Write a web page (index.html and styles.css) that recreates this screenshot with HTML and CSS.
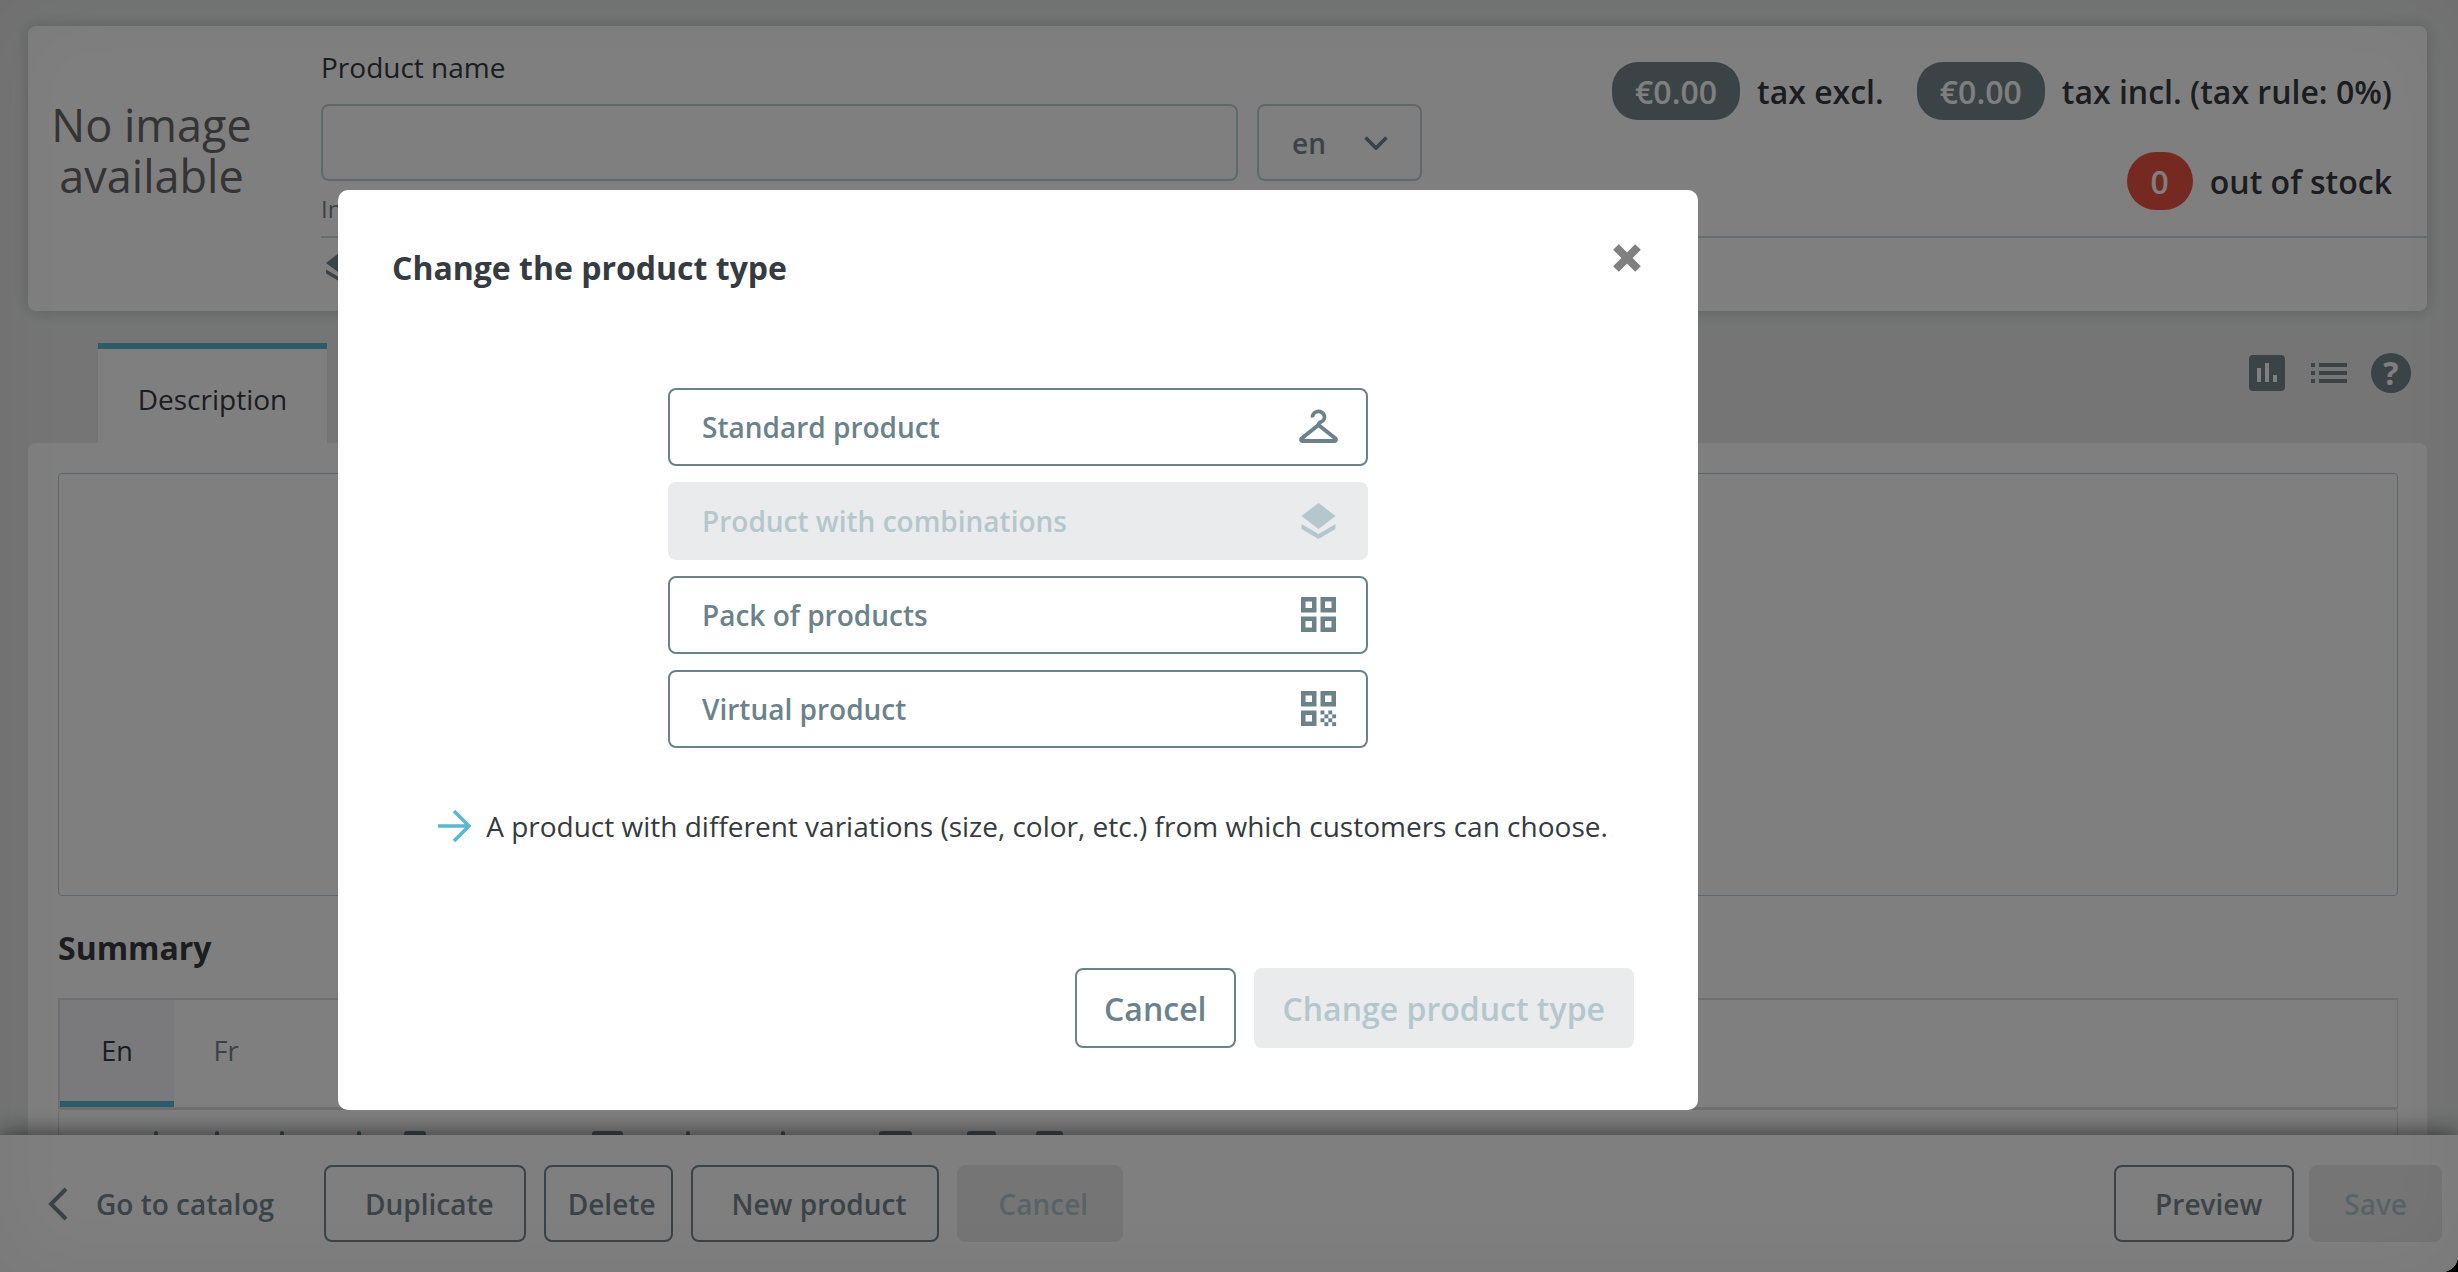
FILE: index.html
```html
<!DOCTYPE html>
<html lang="en">
<head>
    <meta charset="UTF-8">
    <title>Change the product type</title>
    <link rel="stylesheet" href="styles.css">
</head>
<body>
    <div class="page">
        <main class="content">
            <section class="header-card">
                <div class="no-image">No image<br>available</div>
                <div class="header-main">
                    <div class="header-top">
                        <div class="name-field">
                            <label class="field-label">Product name</label>
                            <div class="name-row">
                                <div class="text-input"></div>
                                <div class="lang-select">
                                    <span>en</span>
                                    <svg class="lang-chevron" viewBox="0 0 24 14"><path d="M1.5 1.5L12 12 22.5 1.5" fill="none" stroke="currentColor" stroke-width="3.8"/></svg>
                                </div>
                            </div>
                            <div class="field-hint">Internal reference</div>
                        </div>
                        <div class="prices">
                            <div class="price-row">
                                <span class="pill">€0.00</span>
                                <span class="price-label">tax excl.</span>
                                <span class="pill pill-gap">€0.00</span>
                                <span class="price-label">tax incl. (tax rule: 0%)</span>
                            </div>
                            <div class="price-row">
                                <span class="pill pill-red">0</span>
                                <span class="price-label">out of stock</span>
                            </div>
                        </div>
                    </div>
                    <div class="header-bottom">
                        <svg class="type-icon" viewBox="0 0 34 36">
                            <path d="M17 0l17 13-17 13L0 13z" fill="currentColor"/>
                            <path d="M0 21l17 10 17-10v5L17 36 0 26z" fill="currentColor"/>
                        </svg>
                    </div>
                </div>
            </section>

            <div class="tabs-row">
                <div class="tab-active">Description</div>
                <div class="tab-tools">
                    <svg class="tool-chart" viewBox="0 0 36 36">
                        <rect width="36" height="36" rx="4" fill="currentColor"/>
                        <rect x="8" y="13" width="4" height="14" fill="#fff"/>
                        <rect x="16" y="8" width="4" height="19" fill="#fff"/>
                        <rect x="24" y="20" width="4" height="7" fill="#fff"/>
                    </svg>
                    <svg class="tool-list" viewBox="0 0 36 20">
                        <rect width="4" height="4" fill="currentColor"/>
                        <rect y="8" width="4" height="4" fill="currentColor"/>
                        <rect y="16" width="4" height="4" fill="currentColor"/>
                        <rect x="8" width="28" height="4" fill="currentColor"/>
                        <rect x="8" y="8" width="28" height="4" fill="currentColor"/>
                        <rect x="8" y="16" width="28" height="4" fill="currentColor"/>
                    </svg>
                    <span class="tool-help">?</span>
                </div>
            </div>

            <section class="panel">
                <div class="editor-box"></div>
                <h2 class="panel-title">Summary</h2>
                <div class="lang-tabs">
                    <div class="lang-tab lang-tab-active">En</div>
                    <div class="lang-tab lang-tab-fr">Fr</div>
                </div>
                <div class="editor-toolbar">
                    <span class="tool-mark"></span>
                    <span class="tool-mark"></span>
                    <span class="tool-mark"></span>
                    <span class="tool-mark"></span>
                    <span class="tool-mark"></span>
                    <span class="tool-mark"></span>
                    <span class="tool-mark"></span>
                    <span class="tool-mark"></span>
                    <span class="tool-mark"></span>
                    <span class="tool-mark"></span>
                    <span class="tool-mark"></span>
                </div>
            </section>
        </main>

        <footer class="footer-bar">
            <div class="footer-group">
                <a class="back-link">
                    <svg class="back-icon" viewBox="0 0 22 34"><path d="M19 2L4 17l15 15" fill="none" stroke="currentColor" stroke-width="4"/></svg>
                    <span>Go to catalog</span>
                </a>
                <button class="btn-outline">Duplicate</button>
                <button class="btn-outline btn-delete">Delete</button>
                <button class="btn-outline">New product</button>
                <button class="btn-disabled">Cancel</button>
            </div>
            <div class="footer-group footer-group-right">
                <button class="btn-outline">Preview</button>
                <button class="btn-disabled btn-save">Save</button>
            </div>
        </footer>
    </div>

    <div class="backdrop">
        <div class="modal">
            <div class="modal-header">
                <h3 class="modal-title">Change the product type</h3>
                <svg class="modal-close" viewBox="0 0 30 30"><path d="M4 4l22 22M26 4L4 26" fill="none" stroke="currentColor" stroke-width="8"/></svg>
            </div>

            <div class="type-list">
                <div class="type-option">
                    <span>Standard product</span>
                    <svg class="option-icon" viewBox="0 0 39 33">
                        <path d="M13.5 7A6 5.5 0 1 1 22 11.5Q19.5 12.5 19.5 14.5" fill="none" stroke="currentColor" stroke-width="3.8"/>
                        <path d="M19.5 14.5L2.5 28Q1.5 30.5 3.5 30.5H35.5Q37.5 30.5 36.5 28Z" fill="none" stroke="currentColor" stroke-width="4" stroke-linejoin="round"/>
                    </svg>
                </div>
                <div class="type-option type-option-disabled">
                    <span>Product with combinations</span>
                    <svg class="option-icon" viewBox="0 0 39 36">
                        <path d="M19.5 0l17 13-17 13-17-13z" fill="currentColor"/>
                        <path d="M2.5 21l17 10 17-10v5l-17 10-17-10z" fill="currentColor"/>
                    </svg>
                </div>
                <div class="type-option">
                    <span>Pack of products</span>
                    <svg class="option-icon" viewBox="0 0 39 36">
                        <g fill="none" stroke="currentColor" stroke-width="4.5">
                            <rect x="4.25" y="2.25" width="11" height="11"/>
                            <rect x="23.75" y="2.25" width="11" height="11"/>
                            <rect x="4.25" y="21.75" width="11" height="11"/>
                            <rect x="23.75" y="21.75" width="11" height="11"/>
                        </g>
                    </svg>
                </div>
                <div class="type-option">
                    <span>Virtual product</span>
                    <svg class="option-icon" viewBox="0 0 39 36">
                        <g fill="none" stroke="currentColor" stroke-width="4.5">
                            <rect x="4.25" y="2.25" width="11" height="11"/>
                            <rect x="23.75" y="2.25" width="11" height="11"/>
                            <rect x="4.25" y="21.75" width="11" height="11"/>
                        </g>
                        <g fill="currentColor">
                            <rect x="21.5" y="19.5" width="3.9" height="3.9"/>
                            <rect x="29.3" y="19.5" width="3.9" height="3.9"/>
                            <rect x="25.4" y="23.4" width="3.9" height="3.9"/>
                            <rect x="33.2" y="23.4" width="3.9" height="3.9"/>
                            <rect x="21.5" y="27.3" width="3.9" height="3.9"/>
                            <rect x="29.3" y="27.3" width="3.9" height="3.9"/>
                            <rect x="25.4" y="31.2" width="3.9" height="3.9"/>
                            <rect x="33.2" y="31.2" width="3.9" height="3.9"/>
                        </g>
                    </svg>
                </div>
            </div>

            <div class="type-description">
                <svg class="desc-arrow" viewBox="0 0 34 34"><path d="M1 17h30M17 2l15 15-15 15" fill="none" stroke="currentColor" stroke-width="3.6"/></svg>
                <span>A product with different variations (size, color, etc.) from which customers can choose.</span>
            </div>

            <div class="modal-footer">
                <button class="modal-btn">Cancel</button>
                <button class="modal-btn modal-btn-disabled">Change product type</button>
            </div>
        </div>
    </div>
</body>
</html>
```

FILE: styles.css
```css
html {
    background: #000;
}
body {
    margin: 0;
    font-family: "Open Sans", sans-serif;
    color: #363a41;
}
button {
    font-family: inherit;
}
.page {
    height: 100vh;
    display: flex;
    flex-direction: column;
    overflow: hidden;
    background: #eaebec;
    border-bottom-right-radius: 16px;
}
.content {
    flex: 1;
    min-height: 0;
    overflow: hidden;
    padding: 26px 31px 0 28px;
}

/* Header card */
.header-card {
    height: 285px;
    display: flex;
    background: #fff;
    border-radius: 8px;
    box-shadow: 0 0 16px rgba(0, 0, 0, 0.18);
}
.no-image {
    width: 293px;
    flex-shrink: 0;
    padding: 73px 46px 0 0;
    box-sizing: border-box;
    text-align: center;
    font-size: 45px;
    line-height: 51px;
    color: #686868;
}
.header-main {
    flex: 1;
    display: flex;
    flex-direction: column;
}
.header-top {
    height: 210px;
    display: flex;
    justify-content: space-between;
    border-bottom: 2px solid #cfd8dc;
    padding-right: 35px;
}
.name-field {
    width: 1101px;
    padding-top: 24px;
}
.field-label {
    display: block;
    font-size: 28px;
    line-height: 34px;
    height: 54px;
}
.name-row {
    display: flex;
    gap: 19px;
}
.text-input {
    flex: 1;
    height: 73px;
    border: 2px solid #bed2d9;
    border-radius: 8px;
}
.lang-select {
    width: 128px;
    height: 73px;
    border: 2px solid #bed2d9;
    border-radius: 8px;
    display: flex;
    align-items: center;
    gap: 38px;
    padding-left: 33px;
    font-size: 28px;
    font-weight: 600;
    color: #76868f;
}
.lang-chevron {
    width: 24px;
    height: 14px;
}
.field-hint {
    margin-top: 13px;
    font-size: 24px;
    line-height: 30px;
    color: #76868f;
}
.prices {
    padding-top: 36px;
    display: flex;
    flex-direction: column;
    gap: 32px;
    align-items: flex-end;
}
.price-row {
    display: flex;
    align-items: center;
}
.pill {
    height: 58px;
    min-width: 66px;
    padding: 0 23px;
    box-sizing: border-box;
    border-radius: 26px;
    background: #76868f;
    color: #fff;
    font-size: 32px;
    font-weight: 600;
    display: flex;
    align-items: center;
    justify-content: center;
}
.pill-red {
    background: #ec5242;
    padding: 0;
    border-radius: 29px;
}
.pill-gap {
    margin-left: 33px;
}
.price-label {
    margin-left: 17px;
    font-size: 32px;
    font-weight: 600;
}
.header-bottom {
    padding: 14px 0 0 5px;
    overflow: hidden;
}
.type-icon {
    display: block;
    width: 28px;
    height: 30px;
    color: #76868f;
}

/* Tabs */
.tabs-row {
    margin-top: 32px;
    height: 100px;
    display: flex;
    justify-content: space-between;
    padding: 0 16px 0 70px;
}
.tab-active {
    width: 229px;
    box-sizing: border-box;
    border-top: 6px solid #5ab7d4;
    background: #fff;
    text-align: center;
    font-size: 28px;
    line-height: 100px;
}
.tab-tools {
    display: flex;
    align-items: flex-start;
    padding-top: 10px;
    gap: 26px;
    color: #76868f;
}
.tool-chart {
    width: 36px;
    height: 36px;
    margin-top: 2px;
}
.tool-list {
    width: 36px;
    height: 20px;
    margin-top: 10px;
}
.tool-help {
    width: 40px;
    height: 40px;
    margin-left: -2px;
    border-radius: 50%;
    background: #76868f;
    color: #fff;
    font-size: 32px;
    font-weight: 700;
    line-height: 40px;
    text-align: center;
}
.panel {
    background: #fff;
    padding: 30px 29px 0 30px;
    height: 900px;
    border-radius: 8px 8px 0 0;
}
.editor-box {
    height: 421px;
    border: 1px solid #bbcdd2;
    border-radius: 4px;
}
.panel-title {
    margin: 32px 0 30px;
    font-size: 32px;
    line-height: 40px;
    font-weight: 700;
}
.lang-tabs {
    height: 107px;
    display: flex;
    border: 2px solid #dfdfdf;
    border-right-width: 1px;
}
.lang-tab {
    width: 114px;
    text-align: center;
    font-size: 27px;
    line-height: 102px;
    color: #76868f;
}
.lang-tab-fr {
    width: 104px;
}
.lang-tab-active {
    background: #f4f5f8;
    border-bottom: 6px solid #5ab7d4;
    color: #363a41;
    height: 101px;
}
.editor-toolbar {
    height: 40px;
    border: 1px solid #dfdfdf;
    border-radius: 4px 4px 0 0;
    display: grid;
    grid-template-columns: 95px 4px 57px 4px 61px 4px 73px 4px 43px 22px 166px 31px 63px 4px 91px 4px 94px 33px 55px 29px 40px 27px;
    padding-top: 21px;
}
.tool-mark {
    grid-row: 1;
    height: 20px;
    background: #76868f;
    border-radius: 3px 3px 0 0;
}
.tool-mark:nth-child(1) { grid-column: 2; }
.tool-mark:nth-child(2) { grid-column: 4; }
.tool-mark:nth-child(3) { grid-column: 6; }
.tool-mark:nth-child(4) { grid-column: 8; }
.tool-mark:nth-child(5) { grid-column: 10; }
.tool-mark:nth-child(6) { grid-column: 12; }
.tool-mark:nth-child(7) { grid-column: 14; }
.tool-mark:nth-child(8) { grid-column: 16; }
.tool-mark:nth-child(9) { grid-column: 18; }
.tool-mark:nth-child(10) { grid-column: 20; }
.tool-mark:nth-child(11) { grid-column: 22; }

/* Footer bar */
.footer-bar {
    position: relative;
    height: 137px;
    flex-shrink: 0;
    box-sizing: border-box;
    padding: 30px 16px 0 47px;
    display: flex;
    justify-content: space-between;
    background: #fff;
    box-shadow: 0 0 26px rgba(0, 0, 0, 0.65);
    border-bottom-right-radius: 16px;
}
.footer-group {
    display: flex;
    gap: 18px;
    align-items: flex-start;
}
.footer-group-right {
    gap: 15px;
}
.back-link {
    display: flex;
    align-items: center;
    height: 77px;
    width: 259px;
    flex-shrink: 0;
    gap: 27px;
    color: #76868f;
    font-size: 28px;
    font-weight: 600;
}
.back-icon {
    width: 22px;
    height: 34px;
}
.btn-outline,
.btn-disabled {
    height: 77px;
    border-radius: 8px;
    font-size: 28px;
    font-weight: 600;
    box-sizing: border-box;
}
.btn-outline {
    padding: 0 30px 0 39px;
    background: #fff;
    border: 2px solid #76868f;
    color: #76868f;
}
.btn-delete {
    padding: 0 15px 0 22px;
}
.btn-disabled {
    padding: 0 35px 0 42px;
    background: #eaebec;
    border: 0;
    color: #b3c7cd;
}
.btn-save {
    padding: 0 35px;
}

/* Modal */
.backdrop {
    position: fixed;
    inset: 0;
    background: rgba(0, 0, 0, 0.5);
    border-bottom-right-radius: 16px;
    box-shadow: inset 0 0 90px rgba(0, 0, 0, 0.06);
    padding: 190px 0 0 338px;
    box-sizing: border-box;
}
.modal {
    width: 1360px;
    height: 920px;
    box-sizing: border-box;
    background: #fff;
    border-radius: 10px;
    padding: 53px 64px 62px 54px;
    display: flex;
    flex-direction: column;
}
.modal-header {
    display: flex;
    justify-content: space-between;
    align-items: flex-start;
    height: 145px;
    margin-right: -8px;
}
.modal-title {
    margin: 0;
    font-size: 32px;
    line-height: 50px;
    font-weight: 700;
}
.modal-close {
    width: 30px;
    height: 30px;
    color: #808080;
}
.type-list {
    width: 700px;
    margin: 0 0 0 276px;
    display: flex;
    flex-direction: column;
    gap: 16px;
}
.type-option {
    height: 78px;
    box-sizing: border-box;
    padding: 0 32px;
    border: 2px solid #6c828a;
    border-radius: 8px;
    display: flex;
    align-items: center;
    justify-content: space-between;
    color: #6c828a;
    font-size: 28px;
    font-weight: 600;
}
.type-option-disabled {
    background: #eaebec;
    border-color: #eaebec;
    color: #b3c7cd;
}
.option-icon {
    width: 39px;
    height: 36px;
    margin-right: -4px;
}
.type-description {
    margin-top: 58px;
    padding-left: 19px;
    display: flex;
    align-items: center;
    justify-content: center;
    gap: 15px;
    font-size: 28px;
    line-height: 40px;
    white-space: nowrap;
}
.desc-arrow {
    width: 34px;
    height: 34px;
    color: #5ab7d4;
}
.modal-footer {
    margin-top: auto;
    display: flex;
    justify-content: flex-end;
    gap: 18px;
}
.modal-btn {
    height: 80px;
    padding: 0 27px;
    background: #fff;
    border: 2px solid #6c828a;
    border-radius: 8px;
    color: #6c828a;
    font-size: 32px;
    font-weight: 600;
}
.modal-btn-disabled {
    background: #eaebec;
    border-color: #eaebec;
    color: #b3c7cd;
}
```
